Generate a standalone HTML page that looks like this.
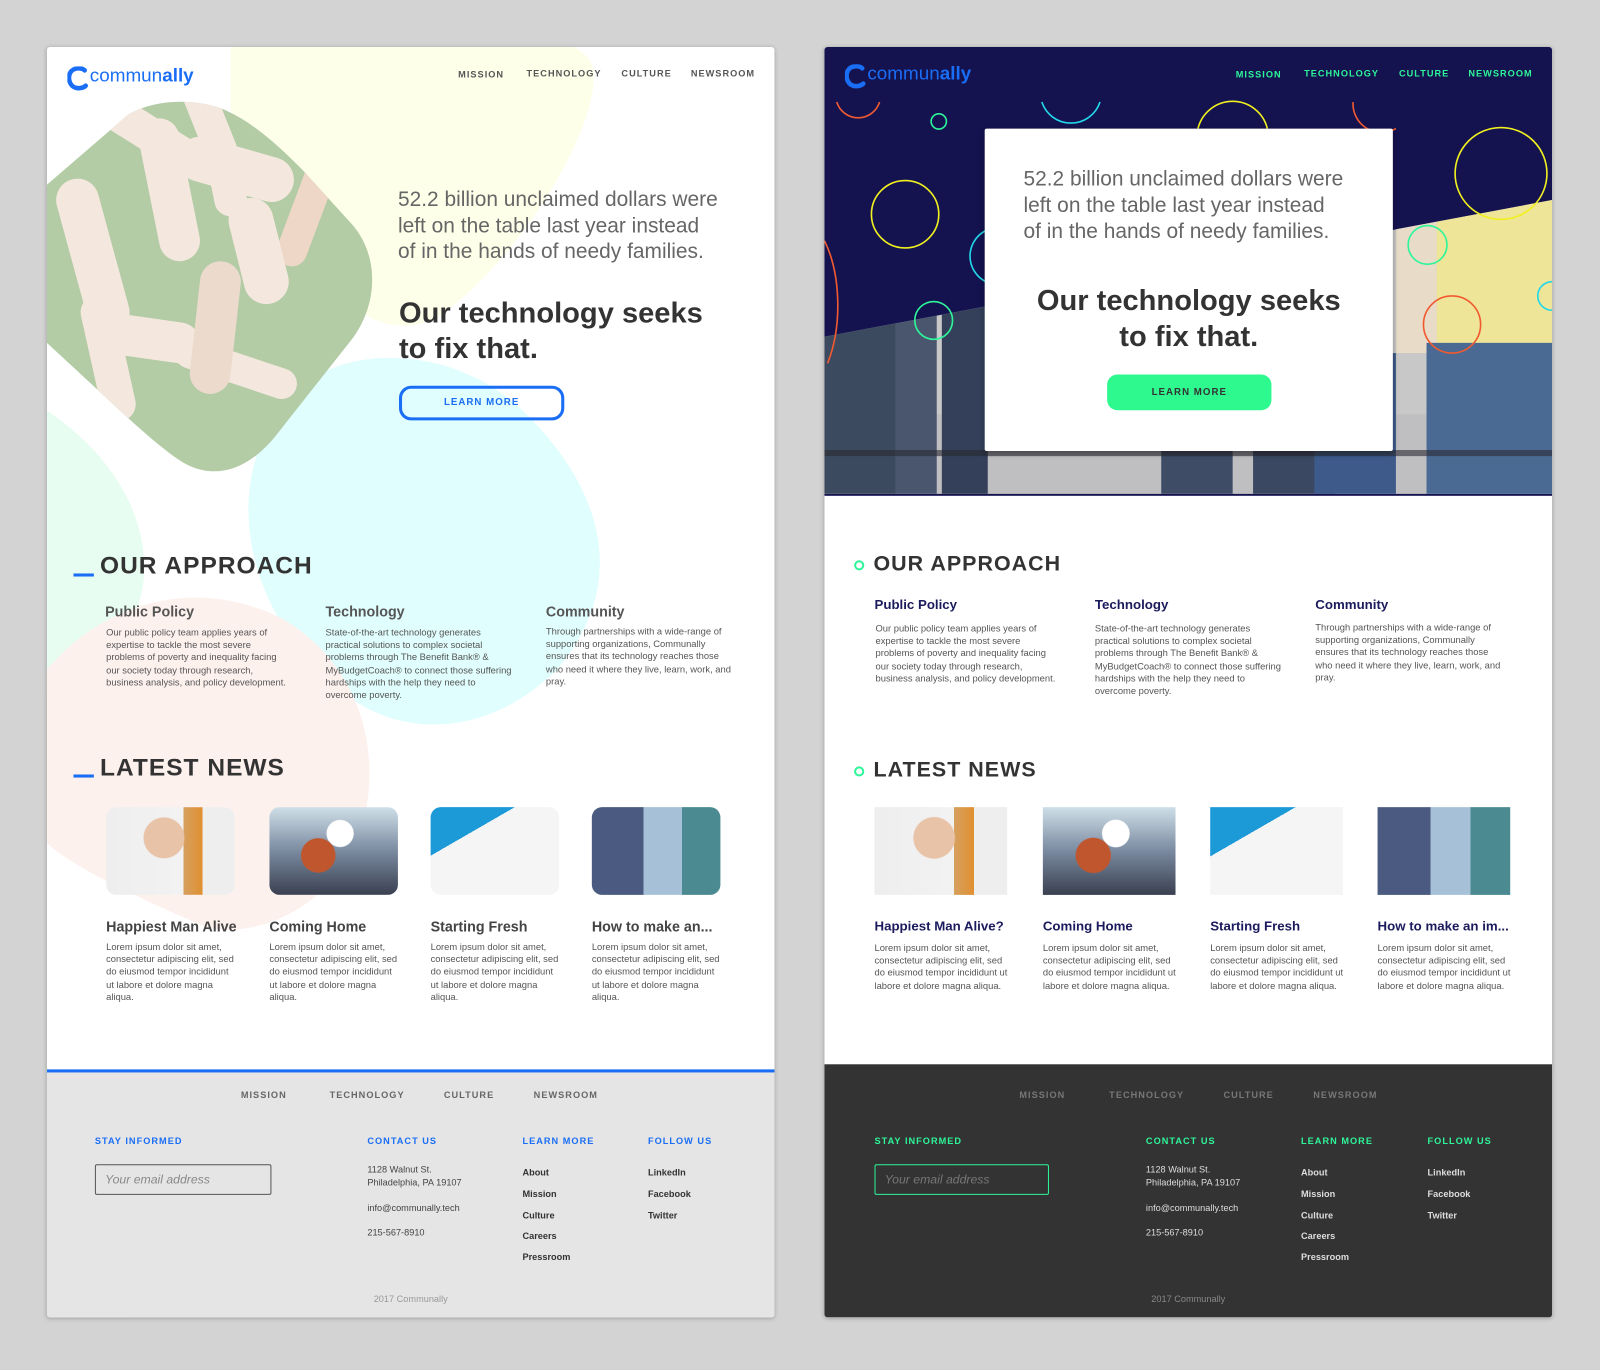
<!DOCTYPE html>
<html><head><meta charset="utf-8">
<style>
*{margin:0;padding:0;box-sizing:border-box}
html,body{width:1600px;height:1370px;overflow:hidden;background:#d3d3d3;font-family:"Liberation Sans",sans-serif}
#w{position:absolute;left:0;top:0;width:1568px;height:1343px;transform:scale(1.020408);transform-origin:0 0}
.card{position:absolute;top:46px;width:713px;height:1245px;overflow:hidden;border-radius:3px;box-shadow:0 1px 4px rgba(0,0,0,.25)}
.t{position:absolute;white-space:nowrap}
.nav{font-size:9px;font-weight:bold;letter-spacing:1px;line-height:12px}
.h2{font-size:24px;font-weight:bold;letter-spacing:1px;color:#333;line-height:28px}
.ct{font-size:14px;font-weight:bold;line-height:18px}
.cb{font-size:9.2px;line-height:12.2px;color:#555;white-space:normal}
.fh{font-size:9px;font-weight:bold;letter-spacing:1px;line-height:12px}
.fs{font-size:9px;line-height:12.5px}
.fn{font-size:9px;font-weight:bold;line-height:12px}
</style></head><body><div id="w">

<!-- LEFT CARD -->
<div class="card" style="left:46px;background:#fff">
 <svg width="713" height="1245" style="position:absolute;left:0;top:0">
  <path d="M180 -20 C220 -40 520 -40 535 20 C545 70 470 200 390 260 C300 320 210 160 180 60Z" fill="#fdffe9"/>
  <path d="M240 340 C290 290 400 290 470 360 C560 450 560 540 500 610 C440 670 360 680 300 640 C200 570 160 430 240 340Z" fill="#e0fefd"/>
  <path d="M-10 350 C40 380 100 440 95 520 C90 580 40 620 -10 640Z" fill="#e8fdf2"/>
  <path d="M0 610 C60 540 150 520 230 560 C300 600 330 680 310 760 C290 840 200 880 150 860 C80 830 20 800 0 780Z" fill="#fdf1ee"/>
  <defs>
   <clipPath id="hx"><path d="M80 66 C105 52 140 50 170 60 C200 72 225 95 250 120 L300 175 C325 205 325 250 300 285 L225 380 C195 418 160 425 130 405 C100 385 60 345 0 290 L0 135 Z"/></clipPath>
  </defs>
  <g clip-path="url(#hx)">
   <rect x="-10" y="40" width="340" height="390" fill="#a9c59a"/>
   <g stroke="#f3e4da" stroke-linecap="round" fill="none">
    <path d="M60 60 L140 110" stroke-width="34"/>
    <path d="M110 90 L130 190" stroke-width="40"/>
    <path d="M150 50 L170 100 L180 150" stroke-width="32"/>
    <path d="M150 110 L220 130" stroke-width="44"/>
    <path d="M270 120 L240 200" stroke-width="30" stroke="#ecd2bf"/>
    <path d="M200 170 L215 230" stroke-width="44"/>
    <path d="M30 150 L60 260" stroke-width="42"/>
    <path d="M50 260 L70 350" stroke-width="34"/>
    <path d="M60 280 L130 290" stroke-width="40"/>
    <path d="M140 300 L230 330" stroke-width="30"/>
    <path d="M170 230 L160 320" stroke-width="40" stroke="#ead6c6"/>
   </g>
   <rect x="-10" y="40" width="340" height="390" fill="#fff" opacity=".12"/>
  </g>
 </svg>
 <svg class="t" style="left:20px;top:19px" width="22" height="24" viewBox="0 0 22 24"><path d="M17 4 C14 1 6 1 3 6 C0 11 2 19 8 21 C12 22 16 21 18 19" fill="none" stroke="#1a6ef5" stroke-width="4.5" stroke-linecap="round"/></svg>
 <div class="t" style="left:42px;top:16px;font-size:18.5px;color:#1a6ef5;line-height:24px">commun<b>ally</b></div>
 <div class="t nav" style="left:403px;top:21px;color:#555">MISSION</div>
 <div class="t nav" style="left:470px;top:20px;color:#555">TECHNOLOGY</div>
 <div class="t nav" style="left:563px;top:20px;color:#555">CULTURE</div>
 <div class="t nav" style="left:631px;top:20px;color:#555">NEWSROOM</div>
 <div class="t" style="left:344px;top:137px;font-size:20.5px;line-height:25.5px;color:#666">52.2 billion unclaimed dollars were<br>left on the table last year instead<br>of in the hands of needy families.</div>
 <div class="t" style="left:345px;top:244px;font-size:28.5px;font-weight:bold;line-height:35px;color:#333">Our technology seeks<br>to fix that.</div>
 <div class="t" style="left:345px;top:332px;width:162px;height:34px;border:3px solid #1a6ef5;border-radius:12px;color:#1a6ef5;font-size:9.5px;font-weight:bold;letter-spacing:1px;text-align:center;line-height:28px">LEARN MORE</div>

 <div class="t" style="left:26px;top:516px;width:20px;height:3px;background:#1a6ef5"></div>
 <div class="t h2" style="left:52px;top:495px">OUR APPROACH</div>
 <div class="t ct" style="left:57px;top:544px;color:#555">Public Policy</div>
 <div class="t ct" style="left:273px;top:544px;color:#555">Technology</div>
 <div class="t ct" style="left:489px;top:544px;color:#555">Community</div>
 <div class="t cb" style="left:58px;top:568px;width:182px">Our public policy team applies years of expertise to tackle the most severe problems of poverty and inequality facing our society today through research, business analysis, and policy development.</div>
 <div class="t cb" style="left:273px;top:568px;width:186px">State-of-the-art technology generates practical solutions to complex societal problems through The Benefit Bank® &amp; MyBudgetCoach® to connect those suffering hardships with the help they need to overcome poverty.</div>
 <div class="t cb" style="left:489px;top:567px;width:186px">Through partnerships with a wide-range of supporting organizations, Communally ensures that its technology reaches those who need it where they live, learn, work, and pray.</div>

 <div class="t" style="left:26px;top:713px;width:20px;height:3px;background:#1a6ef5"></div>
 <div class="t h2" style="left:52px;top:693px">LATEST NEWS</div>
 <div class="t" style="left:58px;top:745px;width:126px;height:86px;border-radius:10px;background:radial-gradient(circle at 45% 35%,#e9c3a8 0 22%,transparent 23%),linear-gradient(90deg,#eee 0,#f2f2f2 60%,#d6a060 60%,#e09030 75%,#eee 75%)"></div>
 <div class="t" style="left:218px;top:745px;width:126px;height:86px;border-radius:10px;background:radial-gradient(circle at 38% 55%,#c0562e 0 18%,transparent 19%),radial-gradient(circle at 55% 30%,#fff 0 14%,transparent 15%),linear-gradient(180deg,#cfdfe8,#7a8aa0 50%,#3a4050)"></div>
 <div class="t" style="left:376px;top:745px;width:126px;height:86px;border-radius:10px;background:linear-gradient(150deg,#1c9ad8 0 30%,#f5f5f5 30% 100%);"></div>
 <div class="t" style="left:534px;top:745px;width:126px;height:86px;border-radius:10px;background:linear-gradient(90deg,#4a5a80 0 40%,#a6c0d8 40% 70%,#4a8a90 70%)"></div>
 <div class="t ct" style="left:58px;top:853px;color:#444">Happiest Man Alive</div>
 <div class="t ct" style="left:218px;top:853px;color:#444">Coming Home</div>
 <div class="t ct" style="left:376px;top:853px;color:#444">Starting Fresh</div>
 <div class="t ct" style="left:534px;top:853px;color:#444">How to make an...</div>
 <div class="t cb" style="left:58px;top:876px;width:130px">Lorem ipsum dolor sit amet, consectetur adipiscing elit, sed do eiusmod tempor incididunt ut labore et dolore magna aliqua.</div>
 <div class="t cb" style="left:218px;top:876px;width:130px">Lorem ipsum dolor sit amet, consectetur adipiscing elit, sed do eiusmod tempor incididunt ut labore et dolore magna aliqua.</div>
 <div class="t cb" style="left:376px;top:876px;width:130px">Lorem ipsum dolor sit amet, consectetur adipiscing elit, sed do eiusmod tempor incididunt ut labore et dolore magna aliqua.</div>
 <div class="t cb" style="left:534px;top:876px;width:130px">Lorem ipsum dolor sit amet, consectetur adipiscing elit, sed do eiusmod tempor incididunt ut labore et dolore magna aliqua.</div>

 <div class="t" style="left:0;top:1002px;width:713px;height:243px;background:#e5e5e5;border-top:3px solid #1a6ef5"></div>
 <div class="t nav" style="left:190px;top:1021px;color:#666">MISSION</div>
 <div class="t nav" style="left:277px;top:1021px;color:#666">TECHNOLOGY</div>
 <div class="t nav" style="left:389px;top:1021px;color:#666">CULTURE</div>
 <div class="t nav" style="left:477px;top:1021px;color:#666">NEWSROOM</div>
 <div class="t fh" style="left:47px;top:1066px;color:#1a6ef5">STAY INFORMED</div>
 <div class="t fh" style="left:314px;top:1066px;color:#1a6ef5">CONTACT US</div>
 <div class="t fh" style="left:466px;top:1066px;color:#1a6ef5">LEARN MORE</div>
 <div class="t fh" style="left:589px;top:1066px;color:#1a6ef5">FOLLOW US</div>
 <div class="t" style="left:47px;top:1095px;width:173px;height:30px;border:1.5px solid #555;border-radius:2px;font-size:12px;font-style:italic;color:#888;padding:7px 9px">Your email address</div>
 <div class="t fs" style="left:314px;top:1094px;color:#444">1128 Walnut St.<br>Philadelphia, PA 19107</div>
 <div class="t fs" style="left:314px;top:1132px;color:#444">info@communally.tech</div>
 <div class="t fs" style="left:314px;top:1156px;color:#444">215-567-8910</div>
 <div class="t fn" style="left:466px;top:1093px;color:#333;line-height:20.8px">About<br>Mission<br>Culture<br>Careers<br>Pressroom</div>
 <div class="t fn" style="left:589px;top:1093px;color:#333;line-height:20.8px">LinkedIn<br>Facebook<br>Twitter</div>
 <div class="t" style="left:0;width:713px;text-align:center;top:1221px;font-size:9px;color:#999;line-height:12px">2017 Communally</div>
</div>

<!-- RIGHT CARD -->
<div class="card" style="left:808px;background:#fff">
 <svg width="713" height="440" style="position:absolute;left:0;top:0">
  <defs>
   <linearGradient id="jn" x1="0" y1="0" x2="0" y2="1"><stop offset="0" stop-color="#4a5a72"/><stop offset=".7" stop-color="#3a4a64"/><stop offset="1" stop-color="#50586a"/></linearGradient>
   <clipPath id="ph"><polygon points="0,284 713,150 713,438 0,438"/></clipPath>
  </defs>
  <rect width="713" height="440" fill="#14124f"/>
  <g clip-path="url(#ph)">
   <rect x="0" y="140" width="713" height="300" fill="#c8c8c8"/>
   <rect x="0" y="360" width="713" height="80" fill="#bfbfc2"/>
   <rect x="0" y="140" width="70" height="300" fill="#3c4a60"/>
   <rect x="70" y="250" width="40" height="190" fill="#49566e"/>
   <rect x="115" y="240" width="45" height="200" fill="#34405a"/>
   <rect x="330" y="380" width="70" height="60" fill="#3e4c66"/>
   <rect x="420" y="380" width="80" height="60" fill="#3a4862"/>
   <rect x="480" y="300" width="80" height="140" fill="#3d5a8a"/>
   <rect x="560" y="140" width="40" height="160" fill="#e8dcc8"/>
   <rect x="600" y="140" width="113" height="160" fill="#efe598"/>
   <rect x="590" y="290" width="123" height="150" fill="#4a6a94"/>
   <rect x="0" y="395" width="713" height="6" fill="#2a2a30" opacity=".6"/>
  </g>
  <g fill="none" stroke-width="1.6">
   <path d="M12 54 A22 22 0 0 0 54 54" stroke="#f05a30"/>
   <circle cx="112" cy="73" r="7.5" stroke="#2ef59a"/>
   <path d="M213 54 A30 30 0 0 0 270 54" stroke="#22d8e8"/>
   <path d="M366 80 A35 35 0 0 1 434 80" stroke="#f0f020"/>
   <path d="M518 54 A28 28 0 0 0 560 80" stroke="#f05a30"/>
   <circle cx="79" cy="164" r="33" stroke="#f0f020"/>
   <path d="M0 190 A45 90 0 0 1 3 310" stroke="#f05a30"/>
   <path d="M158 180 A28 28 0 0 0 158 230" stroke="#22d8e8"/>
   <circle cx="107" cy="268" r="18.5" stroke="#2ef59a"/>
   <circle cx="663" cy="124" r="45" stroke="#f0f020"/>
   <circle cx="591" cy="194" r="19" stroke="#2ef59a"/>
   <circle cx="615" cy="272" r="28" stroke="#f05a30"/>
   <path d="M713 230 A14 14 0 0 0 713 258" stroke="#22d8e8"/>
  </g>
 </svg>
 <svg class="t" style="left:20px;top:17px" width="22" height="24" viewBox="0 0 22 24"><path d="M17 4 C14 1 6 1 3 6 C0 11 2 19 8 21 C12 22 16 21 18 19" fill="none" stroke="#1a6ef5" stroke-width="4.5" stroke-linecap="round"/></svg>
 <div class="t" style="left:42px;top:14px;font-size:18.5px;color:#1a6ef5;line-height:24px">commun<b>ally</b></div>
 <div class="t nav" style="left:403px;top:21px;color:#2ef59a">MISSION</div>
 <div class="t nav" style="left:470px;top:20px;color:#2ef59a">TECHNOLOGY</div>
 <div class="t nav" style="left:563px;top:20px;color:#2ef59a">CULTURE</div>
 <div class="t nav" style="left:631px;top:20px;color:#2ef59a">NEWSROOM</div>
 <div class="t" style="left:157px;top:80px;width:400px;height:316px;background:#fff;border-radius:2px;box-shadow:0 2px 6px rgba(0,0,0,.3)"></div>
 <div class="t" style="left:195px;top:117px;font-size:20.5px;line-height:25.5px;color:#666">52.2 billion unclaimed dollars were<br>left on the table last year instead<br>of in the hands of needy families.</div>
 <div class="t" style="left:157px;width:400px;text-align:center;top:232px;font-size:28.5px;font-weight:bold;line-height:35px;color:#333">Our technology seeks<br>to fix that.</div>
 <div class="t" style="left:277px;top:321px;width:161px;height:35px;background:#2ef98f;border-radius:10px;color:#333;font-size:9.5px;font-weight:bold;letter-spacing:1px;text-align:center;line-height:35px">LEARN MORE</div>

 <div class="t" style="left:29px;top:503px;width:10px;height:10px;border:2px solid #2ef59a;border-radius:50%"></div>
 <div class="t h2" style="left:48px;top:493px;font-size:21px">OUR APPROACH</div>
 <div class="t ct" style="left:49px;top:538px;color:#1b1a5c;font-size:13px">Public Policy</div>
 <div class="t ct" style="left:265px;top:538px;color:#1b1a5c;font-size:13px">Technology</div>
 <div class="t ct" style="left:481px;top:538px;color:#1b1a5c;font-size:13px">Community</div>
 <div class="t cb" style="left:50px;top:564px;width:182px">Our public policy team applies years of expertise to tackle the most severe problems of poverty and inequality facing our society today through research, business analysis, and policy development.</div>
 <div class="t cb" style="left:265px;top:564px;width:186px">State-of-the-art technology generates practical solutions to complex societal problems through The Benefit Bank® &amp; MyBudgetCoach® to connect those suffering hardships with the help they need to overcome poverty.</div>
 <div class="t cb" style="left:481px;top:563px;width:186px">Through partnerships with a wide-range of supporting organizations, Communally ensures that its technology reaches those who need it where they live, learn, work, and pray.</div>

 <div class="t" style="left:29px;top:705px;width:10px;height:10px;border:2px solid #2ef59a;border-radius:50%"></div>
 <div class="t h2" style="left:48px;top:695px;font-size:21px">LATEST NEWS</div>
 <div class="t" style="left:49px;top:745px;width:130px;height:86px;background:radial-gradient(circle at 45% 35%,#e9c3a8 0 22%,transparent 23%),linear-gradient(90deg,#eee 0,#f2f2f2 60%,#d6a060 60%,#e09030 75%,#eee 75%)"></div>
 <div class="t" style="left:214px;top:745px;width:130px;height:86px;background:radial-gradient(circle at 38% 55%,#c0562e 0 18%,transparent 19%),radial-gradient(circle at 55% 30%,#fff 0 14%,transparent 15%),linear-gradient(180deg,#cfdfe8,#7a8aa0 50%,#3a4050)"></div>
 <div class="t" style="left:378px;top:745px;width:130px;height:86px;background:linear-gradient(150deg,#1c9ad8 0 30%,#f5f5f5 30% 100%)"></div>
 <div class="t" style="left:542px;top:745px;width:130px;height:86px;background:linear-gradient(90deg,#4a5a80 0 40%,#a6c0d8 40% 70%,#4a8a90 70%)"></div>
 <div class="t ct" style="left:49px;top:853px;color:#1b1a5c;font-size:13px">Happiest Man Alive?</div>
 <div class="t ct" style="left:214px;top:853px;color:#1b1a5c;font-size:13px">Coming Home</div>
 <div class="t ct" style="left:378px;top:853px;color:#1b1a5c;font-size:13px">Starting Fresh</div>
 <div class="t ct" style="left:542px;top:853px;color:#1b1a5c;font-size:13px">How to make an im...</div>
 <div class="t cb" style="left:49px;top:877px;width:132px">Lorem ipsum dolor sit amet, consectetur adipiscing elit, sed do eiusmod tempor incididunt ut labore et dolore magna aliqua.</div>
 <div class="t cb" style="left:214px;top:877px;width:132px">Lorem ipsum dolor sit amet, consectetur adipiscing elit, sed do eiusmod tempor incididunt ut labore et dolore magna aliqua.</div>
 <div class="t cb" style="left:378px;top:877px;width:132px">Lorem ipsum dolor sit amet, consectetur adipiscing elit, sed do eiusmod tempor incididunt ut labore et dolore magna aliqua.</div>
 <div class="t cb" style="left:542px;top:877px;width:132px">Lorem ipsum dolor sit amet, consectetur adipiscing elit, sed do eiusmod tempor incididunt ut labore et dolore magna aliqua.</div>

 <div class="t" style="left:0;top:997px;width:713px;height:248px;background:#333"></div>
 <div class="t nav" style="left:191px;top:1021px;color:#777">MISSION</div>
 <div class="t nav" style="left:279px;top:1021px;color:#777">TECHNOLOGY</div>
 <div class="t nav" style="left:391px;top:1021px;color:#777">CULTURE</div>
 <div class="t nav" style="left:479px;top:1021px;color:#777">NEWSROOM</div>
 <div class="t fh" style="left:49px;top:1066px;color:#2ef59a">STAY INFORMED</div>
 <div class="t fh" style="left:315px;top:1066px;color:#2ef59a">CONTACT US</div>
 <div class="t fh" style="left:467px;top:1066px;color:#2ef59a">LEARN MORE</div>
 <div class="t fh" style="left:591px;top:1066px;color:#2ef59a">FOLLOW US</div>
 <div class="t" style="left:49px;top:1095px;width:171px;height:30px;border:1.5px solid #2ef59a;border-radius:2px;font-size:12px;font-style:italic;color:#777;padding:7px 9px">Your email address</div>
 <div class="t fs" style="left:315px;top:1094px;color:#ddd">1128 Walnut St.<br>Philadelphia, PA 19107</div>
 <div class="t fs" style="left:315px;top:1132px;color:#ddd">info@communally.tech</div>
 <div class="t fs" style="left:315px;top:1156px;color:#ddd">215-567-8910</div>
 <div class="t fn" style="left:467px;top:1093px;color:#ddd;line-height:20.8px">About<br>Mission<br>Culture<br>Careers<br>Pressroom</div>
 <div class="t fn" style="left:591px;top:1093px;color:#ddd;line-height:20.8px">LinkedIn<br>Facebook<br>Twitter</div>
 <div class="t" style="left:0;width:713px;text-align:center;top:1221px;font-size:9px;color:#888;line-height:12px">2017 Communally</div>
</div>

</div></body></html>
